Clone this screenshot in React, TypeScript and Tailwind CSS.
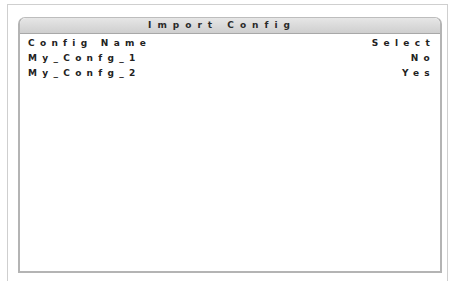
export default function App() {
  const rows = [
    { name: 'Config Name', value: 'Select' },
    { name: 'My_Confg_1', value: 'No' },
    { name: 'My_Confg_2', value: 'Yes' },
  ];

  return (
    <div className="w-[454px] h-[281px] bg-white overflow-hidden pt-[4px] pl-[7px]">
      <div className="w-[441px] h-[290px] border-t border-l border-r border-[#cfcfcf] pt-[12px] pl-[10px]">
        <div className="w-[424px] h-[256px] flex flex-col bg-white rounded-t-[7px] border-l-2 border-r-2 border-b-2 border-[#b4b4b4] border-t border-t-[#bdbdbd]">
          <div
            className="h-[16px] flex items-center justify-center pr-[16px] rounded-t-[6px] bg-gradient-to-b from-[#e6e6e6] to-[#cfcfcf] border-b border-[#a8a8a8] text-[9px] font-bold text-[#2a2a2a] tracking-[6px] leading-none"
            style={{ fontFamily: '"DejaVu Sans", sans-serif' }}
          >
            Import Config
          </div>
          <div
            className="flex flex-col pt-[2px] pl-[8px] pr-[5px] text-[9px] font-bold text-[#222] tracking-[5.3px]"
            style={{ fontFamily: '"DejaVu Sans", sans-serif' }}
          >
            {rows.map((r) => (
              <div key={r.name} className="flex justify-between h-[15px] items-center leading-none">
                <span>{r.name}</span>
                <span>{r.value}</span>
              </div>
            ))}
          </div>
        </div>
      </div>
    </div>
  );
}
